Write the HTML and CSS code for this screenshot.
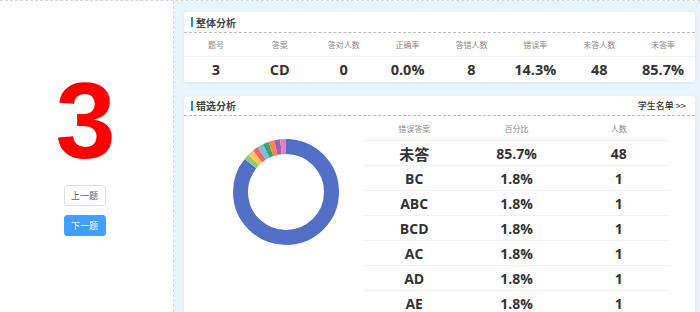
FILE: index.html
```html
<!DOCTYPE html>
<html lang="zh">
<head>
  <meta charset="UTF-8" />
  <title>题目分析</title>
  <link rel="stylesheet" href="styles.css">
</head>
<body>
  <div class="page">
    <div class="side">
      <div class="big-num">3</div>
      <button class="btn">上一题</button>
      <button class="btn btn-primary">下一题</button>
    </div>

    <div class="main">
      <div class="card">
        <div class="card-title"><span class="bar"></span>整体分析</div>
        <div class="summary">
          <div class="cell head">题号</div>
          <div class="cell head">答案</div>
          <div class="cell head">答对人数</div>
          <div class="cell head">正确率</div>
          <div class="cell head">答错人数</div>
          <div class="cell head">错误率</div>
          <div class="cell head">未答人数</div>
          <div class="cell head">未答率</div>
          <div class="cell val">3</div>
          <div class="cell val">CD</div>
          <div class="cell val">0</div>
          <div class="cell val">0.0%</div>
          <div class="cell val">8</div>
          <div class="cell val">14.3%</div>
          <div class="cell val">48</div>
          <div class="cell val">85.7%</div>
        </div>
      </div>

      <div class="card card-wrong">
        <div class="card-title"><span class="bar"></span>错选分析<a class="more">学生名单 &gt;&gt;</a></div>
        <div class="wrong-body">
          <div class="chart">
            <svg width="110" height="110" viewBox="0 0 110 110">
              <g transform="rotate(-90 55 55)" fill="none" stroke-width="15">
                <circle cx="55" cy="55" r="45.5" pathLength="56" stroke="#5470c6" stroke-dasharray="48 8" stroke-dashoffset="0"/>
                <circle cx="55" cy="55" r="45.5" pathLength="56" stroke="#91cc75" stroke-dasharray="1 55" stroke-dashoffset="-48"/>
                <circle cx="55" cy="55" r="45.5" pathLength="56" stroke="#fac858" stroke-dasharray="1 55" stroke-dashoffset="-49"/>
                <circle cx="55" cy="55" r="45.5" pathLength="56" stroke="#ee6666" stroke-dasharray="1 55" stroke-dashoffset="-50"/>
                <circle cx="55" cy="55" r="45.5" pathLength="56" stroke="#73c0de" stroke-dasharray="1 55" stroke-dashoffset="-51"/>
                <circle cx="55" cy="55" r="45.5" pathLength="56" stroke="#3ba272" stroke-dasharray="1 55" stroke-dashoffset="-52"/>
                <circle cx="55" cy="55" r="45.5" pathLength="56" stroke="#fc8452" stroke-dasharray="1 55" stroke-dashoffset="-53"/>
                <circle cx="55" cy="55" r="45.5" pathLength="56" stroke="#9a60b4" stroke-dasharray="1 55" stroke-dashoffset="-54"/>
                <circle cx="55" cy="55" r="45.5" pathLength="56" stroke="#ea7ccc" stroke-dasharray="1 55" stroke-dashoffset="-55"/>
              </g>
            </svg>
          </div>
          <table class="wrong-table">
            <thead>
              <tr><th>错误答案</th><th>百分比</th><th>人数</th></tr>
            </thead>
            <tbody>
              <tr><td class="cn">未答</td><td>85.7%</td><td>48</td></tr>
              <tr><td>BC</td><td>1.8%</td><td>1</td></tr>
              <tr><td>ABC</td><td>1.8%</td><td>1</td></tr>
              <tr><td>BCD</td><td>1.8%</td><td>1</td></tr>
              <tr><td>AC</td><td>1.8%</td><td>1</td></tr>
              <tr><td>AD</td><td>1.8%</td><td>1</td></tr>
              <tr><td>AE</td><td>1.8%</td><td>1</td></tr>
            </tbody>
          </table>
        </div>
      </div>
    </div>
  </div>
</body>
</html>
```

FILE: styles.css
```css
body {
  margin: 0;
  font-family: "Open Sans", "Noto Sans CJK SC", sans-serif;
  color: #333;
  background: #fff;
  overflow: hidden;
}

.page {
  display: flex;
  height: 312px;
  border-top: 1px dashed #d8d8d8;
  box-sizing: border-box;
}

/* left column */
.side {
  width: 173px;
  flex-shrink: 0;
  border-right: 1px dashed #d8d8d8;
  display: flex;
  flex-direction: column;
  align-items: center;
}

.big-num {
  font-family: "Liberation Sans", Arial, sans-serif;
  font-weight: bold;
  font-size: 108px;
  line-height: 110px;
  color: #ff0000;
  margin-top: 65px;
  margin-left: -2px;
}

.btn {
  width: 42px;
  height: 21px;
  padding: 0;
  margin-top: 9px;
  font-family: "Noto Sans CJK SC", sans-serif;
  font-size: 9px;
  color: #606266;
  background: #fff;
  border: 1px solid #dcdfe6;
  border-radius: 3px;
  margin-left: -4px;
}

.btn-primary {
  margin-top: 9px;
  color: #fff;
  background: #409eff;
  border-color: #409eff;
}

/* right area */
.main {
  flex: 1;
  background: #e7f4f9;
  padding: 11px 5px 0 10px;
  overflow: hidden;
}

.card {
  background: #fff;
  border-radius: 3px;
  box-shadow: 0 1px 4px rgba(0, 0, 0, 0.06);
}

.card-wrong {
  margin-top: 14px;
  height: 240px;
}

.card-title {
  display: flex;
  align-items: center;
  height: 20px;
  padding: 0 9px 0 7px;
  font-family: "Noto Sans CJK SC", sans-serif;
  font-size: 10px;
  font-weight: bold;
  color: #444;
  border-bottom: 1px dashed #bbb;
}

.card-wrong .card-title {
  height: 19px;
}

.bar {
  width: 2px;
  height: 10px;
  background: #1f8bff;
  margin-right: 3px;
}

.more {
  margin-left: auto;
  font-weight: 500;
  font-size: 9px;
  color: #333;
}

.summary {
  display: grid;
  grid-template-columns: repeat(8, 1fr);
}

.cell {
  text-align: center;
}

.cell.head {
  height: 23px;
  line-height: 23px;
  font-family: "Noto Sans CJK SC", sans-serif;
  font-size: 8px;
  color: #888;
  border-bottom: 1px solid #f2f2f2;
}

.cell.val {
  height: 25px;
  line-height: 25px;
  font-size: 14.5px;
  font-weight: bold;
  color: #333;
}

.wrong-body {
  display: flex;
}

.chart {
  width: 204px;
  padding-top: 21px;
  display: flex;
  justify-content: center;
}

.wrong-table {
  margin-left: -25px;
  width: 307px;
  table-layout: fixed;
  border-collapse: collapse;
}

.wrong-table th {
  height: 24px;
  padding: 0;
  font-family: "Noto Sans CJK SC", sans-serif;
  font-size: 8px;
  font-weight: normal;
  color: #888;
  border-bottom: 1px solid #f2f2f2;
}

.wrong-table td {
  height: 24px;
  padding: 0;
  text-align: center;
  font-size: 14px;
  font-weight: bold;
  color: #333;
  border-bottom: 1px solid #f2f2f2;
}

.wrong-table td.cn {
  font-family: "Noto Sans CJK SC", sans-serif;
  font-size: 15px;
}
```
